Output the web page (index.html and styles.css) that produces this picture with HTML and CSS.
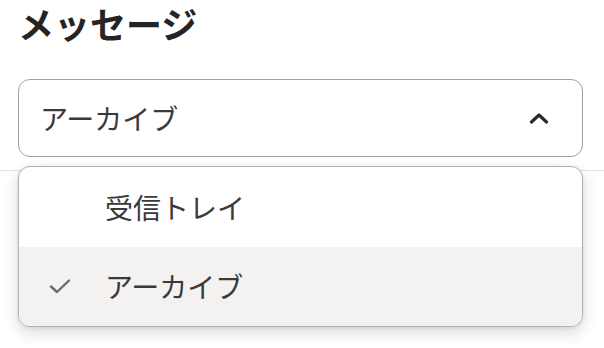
FILE: index.html
```html
<!DOCTYPE html>
<html lang="ja">
<head>
<meta charset="utf-8">
<link rel="stylesheet" href="styles.css">
</head>
<body>
<div class="page">
  <h1 class="title">メッセージ</h1>
  <div class="select-wrap">
    <div class="select">
      <span class="select-value">アーカイブ</span>
      <svg class="chevron" width="20" height="12" viewBox="0 0 20 12"><path d="M2.5 10 L10 3 L17.5 10" fill="none" stroke="#2b2b2b" stroke-width="3.2" stroke-linecap="round" stroke-linejoin="round"/></svg>
    </div>
    <div class="menu">
      <div class="item"><span class="check"></span><span class="label">受信トレイ</span></div>
      <div class="item selected"><span class="check"><svg width="22" height="16" viewBox="0 0 22 16"><path d="M2 8.5 L8 14 L20 2.5" fill="none" stroke="#6b6b6b" stroke-width="2.4" stroke-linecap="round" stroke-linejoin="round"/></svg></span><span class="label">アーカイブ</span></div>
    </div>
  </div>
  <div class="divider"></div>
</div>
</body>
</html>
```
FILE: styles.css
```css
html, body {
  margin: 0;
  padding: 0;
  background: #ffffff;
}
body {
  font-family: "Noto Sans CJK JP", "Noto Sans", sans-serif;
  color: #333;
  width: 604px;
  height: 348px;
  overflow: hidden;
}
.page {
  display: flex;
  flex-direction: column;
}
.title {
  margin: 0;
  padding: 0 18px;
  font-size: 36px;
  line-height: 46px;
  font-weight: 700;
  color: #242424;
}
.select-wrap {
  position: relative;
  margin: 33px 21px 0 18px;
}
.select {
  box-sizing: border-box;
  height: 78px;
  border: 1.5px solid #a0a0a0;
  border-radius: 12px;
  display: flex;
  align-items: center;
  justify-content: space-between;
  padding: 0 33px 0 21px;
  background: #fff;
}
.select-value {
  font-size: 28px;
  line-height: 1;
  color: #3a3a3a;
}
.chevron {
  display: block;
}
.divider {
  margin-top: 13px;
  height: 1px;
  background: #e3e3e3;
}
.menu {
  position: absolute;
  top: calc(100% + 9px);
  left: 0;
  right: 0;
  box-sizing: border-box;
  height: 161px;
  border: 1.5px solid #b0b0b0;
  border-radius: 12px;
  background: #fff;
  overflow: hidden;
  box-shadow: 0 6px 16px rgba(0, 0, 0, 0.14), 0 1px 4px rgba(0, 0, 0, 0.08);
  z-index: 2;
  display: flex;
  flex-direction: column;
}
.item {
  flex: 1;
  display: flex;
  align-items: center;
}
.item.selected {
  background: #f3f2f1;
}
.check {
  width: 86px;
  padding-left: 30px;
  box-sizing: border-box;
  display: flex;
  align-items: center;
}
.check svg {
  display: block;
}
.label {
  font-size: 28px;
  line-height: 1;
  color: #3a3a3a;
}
```
